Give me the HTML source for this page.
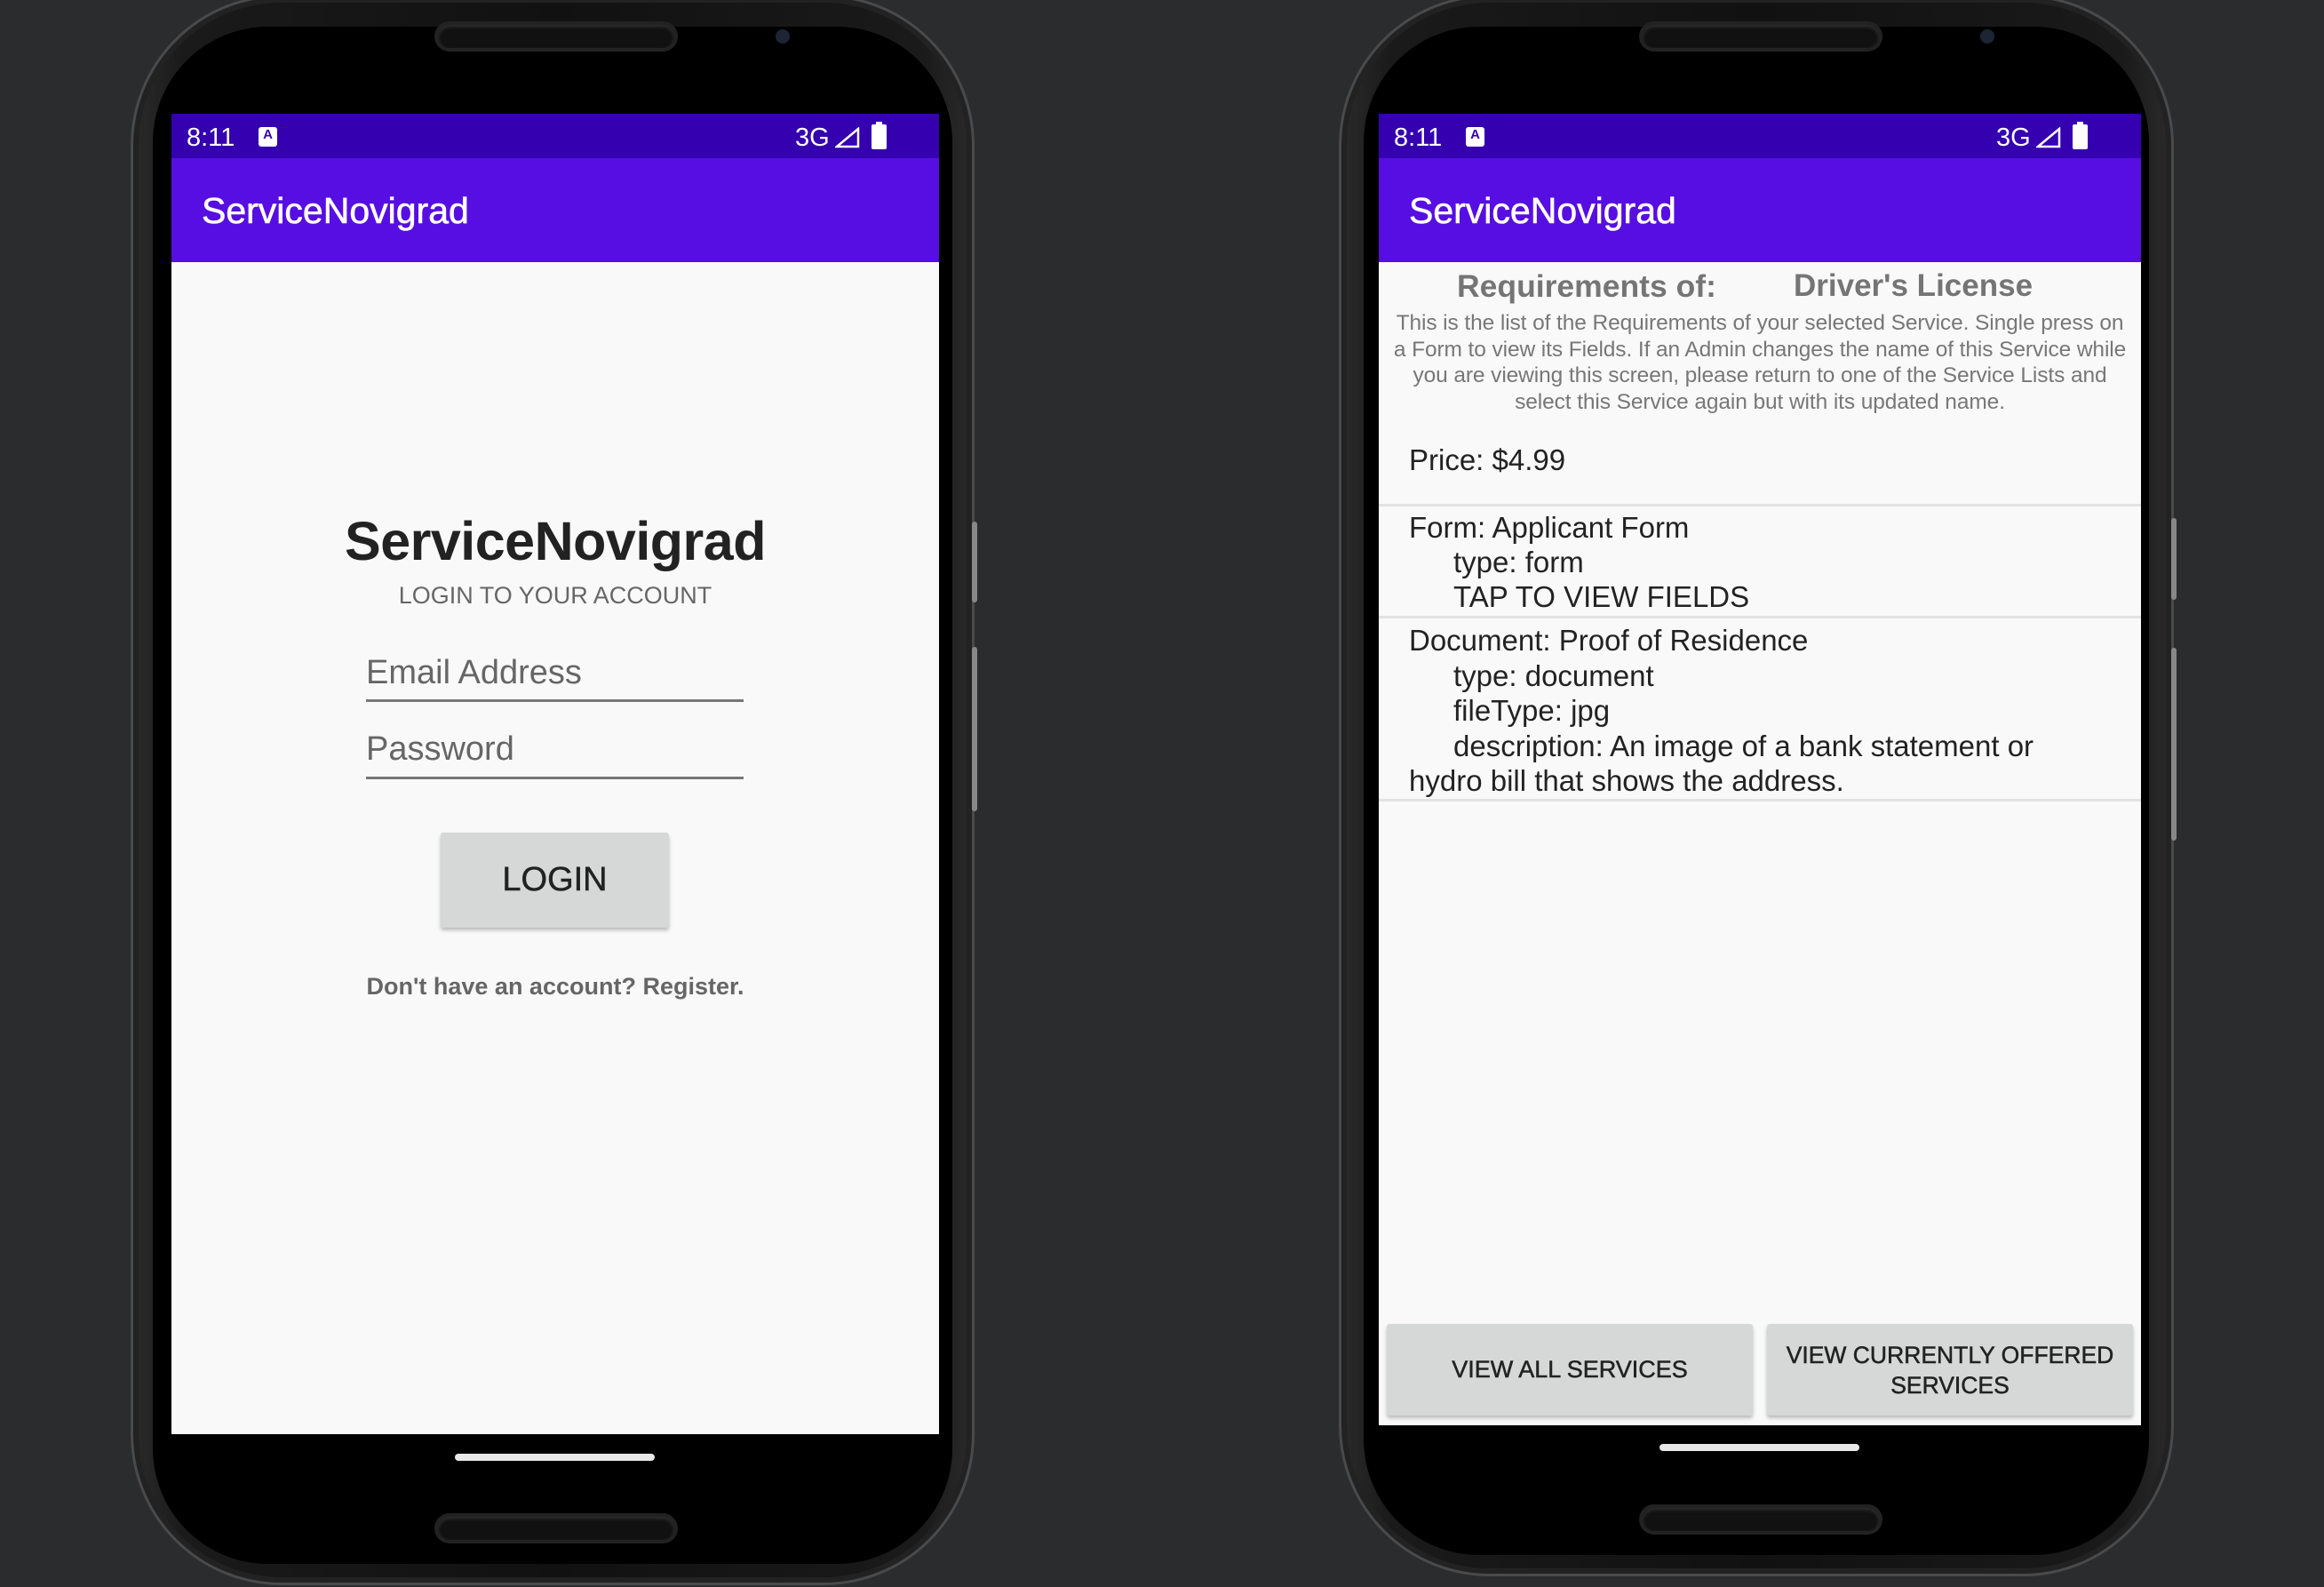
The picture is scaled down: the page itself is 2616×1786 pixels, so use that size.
<!DOCTYPE html>
<html><head><meta charset="utf-8"><style>
*{margin:0;padding:0;box-sizing:border-box}
body{width:2616px;height:1786px;background:#2b2c2e;position:relative;overflow:hidden;font-family:"Liberation Sans",sans-serif}
.abs{position:absolute}
.body{position:absolute;border-radius:170px;background:linear-gradient(90deg,#2a2a2a,#1a1a1a 6%,#111 50%,#1a1a1a 94%,#2a2a2a);border:3px solid #4a4a4a;box-shadow:inset 0 0 0 6px #222}
.bezel{position:absolute;background:#000;border-radius:130px}
.spk{position:absolute;border-radius:20px;background:#111;border:4px solid #222;box-shadow:inset 0 2px 4px #333}
.screen{position:absolute;background:#f9f9f9;overflow:hidden}
.sb{position:absolute;left:0;right:0;top:0;height:50px;background:#3400b0;color:#fff}
.ab{position:absolute;left:0;right:0;top:50px;height:117px;background:#570ee2;color:#fff;font-size:41px}
.ab span{position:absolute;left:34px;top:36px;-webkit-text-stroke:0.6px #fff}
.time{position:absolute;left:17px;top:11px;font-size:29px}
.aicon{position:absolute;left:98px;top:15px;width:21px;height:22px;background:#fff;border-radius:3px;color:#3400b0;font-size:15px;font-weight:bold;text-align:center;line-height:18px}
.g3{position:absolute;top:11px;font-size:29px}
.side{position:absolute;width:6px;background:#888;border-radius:3px}
.home{position:absolute;height:8px;background:#e8e8e8;border-radius:4px}
.btn{position:absolute;background:#d6d7d7;box-shadow:0 3px 4px rgba(0,0,0,.25);border-radius:3px;color:#222;text-align:center;display:flex;align-items:center;justify-content:center;-webkit-text-stroke:0.5px #222}
.row{position:absolute;left:57px;font-size:33px;color:#222}
.hr{position:absolute;left:0;right:0;height:3px;background:#e2e2e2}
</style></head><body>

<!-- LEFT PHONE -->
<div class="body" style="left:147px;top:-6px;width:950px;height:1790px"></div>
<div class="side" style="left:1094px;top:587px;height:91px"></div>
<div class="side" style="left:1094px;top:728px;height:185px"></div>
<div class="bezel" style="left:172px;top:30px;width:900px;height:1730px"></div>
<div class="spk" style="left:489px;top:24px;width:274px;height:34px"></div>
<div class="abs" style="left:873px;top:33px;width:16px;height:16px;border-radius:50%;background:#1d2433"></div>
<div class="spk" style="left:489px;top:1703px;width:274px;height:34px"></div>
<div class="home" style="left:512px;top:1636px;width:225px"></div>
<div class="screen" style="left:193px;top:128px;width:864px;height:1486px">
  <div class="sb"><span class="time">8:11</span><span class="aicon">A</span>
    <span class="g3" style="left:702px">3G</span>
    <svg class="abs" style="left:747px;top:15px" width="28" height="24"><path d="M2 22 L26 22 L26 2 Z" fill="none" stroke="#fff" stroke-width="2.5"/></svg>
    <div class="abs" style="left:788px;top:12px;width:17px;height:28px;background:#fff;border-radius:2px"></div>
    <div class="abs" style="left:793px;top:9px;width:7px;height:4px;background:#fff"></div>
  </div>
  <div class="ab"><span>ServiceNovigrad</span></div>
  <div class="abs" style="left:0;right:0;top:446px;text-align:center;font-size:61px;font-weight:bold;color:#222;letter-spacing:-0.5px">ServiceNovigrad</div>
  <div class="abs" style="left:0;right:0;top:527px;text-align:center;font-size:27px;color:#666">LOGIN TO YOUR ACCOUNT</div>
  <div class="abs" style="left:219px;top:608px;font-size:38px;color:#666">Email Address</div>
  <div class="abs" style="left:219px;top:659px;width:425px;height:3px;background:#777"></div>
  <div class="abs" style="left:219px;top:694px;font-size:38px;color:#666">Password</div>
  <div class="abs" style="left:219px;top:746px;width:425px;height:3px;background:#777"></div>
  <div class="btn" style="left:303px;top:809px;width:257px;height:107px;font-size:38px">LOGIN</div>
  <div class="abs" style="left:0;right:0;top:967px;text-align:center;font-size:27px;font-weight:bold;color:#666">Don't have an account? Register.</div>
</div>

<!-- RIGHT PHONE -->
<div class="body" style="left:1507px;top:-6px;width:940px;height:1780px"></div>
<div class="side" style="left:2444px;top:583px;height:92px"></div>
<div class="side" style="left:2444px;top:729px;height:217px"></div>
<div class="bezel" style="left:1535px;top:30px;width:884px;height:1720px"></div>
<div class="spk" style="left:1845px;top:24px;width:274px;height:34px"></div>
<div class="abs" style="left:2229px;top:33px;width:16px;height:16px;border-radius:50%;background:#1d2433"></div>
<div class="spk" style="left:1845px;top:1693px;width:274px;height:34px"></div>
<div class="home" style="left:1868px;top:1625px;width:225px"></div>
<div class="screen" style="left:1552px;top:128px;width:858px;height:1476px">
  <div class="sb"><span class="time">8:11</span><span class="aicon">A</span>
    <span class="g3" style="left:695px">3G</span>
    <svg class="abs" style="left:740px;top:15px" width="28" height="24"><path d="M2 22 L26 22 L26 2 Z" fill="none" stroke="#fff" stroke-width="2.5"/></svg>
    <div class="abs" style="left:781px;top:12px;width:17px;height:28px;background:#fff;border-radius:2px"></div>
    <div class="abs" style="left:786px;top:9px;width:7px;height:4px;background:#fff"></div>
  </div>
  <div class="ab"><span>ServiceNovigrad</span></div>
  <div class="abs" style="left:88px;top:174px;font-size:35.5px;font-weight:bold;color:#757575">Requirements of:</div>
  <div class="abs" style="left:467px;top:174px;font-size:35px;font-weight:bold;color:#757575">Driver's License</div>
  <div class="abs" style="left:0;right:0;top:221px;text-align:center;font-size:24.5px;line-height:29.5px;color:#777;letter-spacing:-0.1px">This is the list of the Requirements of your selected Service. Single press on<br>a Form to view its Fields. If an Admin changes the name of this Service while<br>you are viewing this screen, please return to one of the Service Lists and<br>select this Service again but with its updated name.</div>
  <div class="row" style="left:34px;top:371px">Price: $4.99</div>
  <div class="hr" style="top:439px"></div>
  <div class="row" style="left:34px;top:446px;line-height:39px">Form: Applicant Form<br><span style="padding-left:50px">type: form</span><br><span style="padding-left:50px">TAP TO VIEW FIELDS</span></div>
  <div class="hr" style="top:565px"></div>
  <div class="row" style="left:34px;top:573px;line-height:39.5px">Document: Proof of Residence<br><span style="padding-left:50px">type: document</span><br><span style="padding-left:50px">fileType: jpg</span><br><span style="padding-left:50px">description: An image of a bank statement or</span><br>hydro bill that shows the address.</div>
  <div class="hr" style="top:771px"></div>
  <div class="btn" style="left:9px;top:1362px;width:412px;height:103px;font-size:27px">VIEW ALL SERVICES</div>
  <div class="btn" style="left:437px;top:1362px;width:412px;height:103px;font-size:26.5px;line-height:34px">VIEW CURRENTLY OFFERED<br>SERVICES</div>
</div>
</body></html>
